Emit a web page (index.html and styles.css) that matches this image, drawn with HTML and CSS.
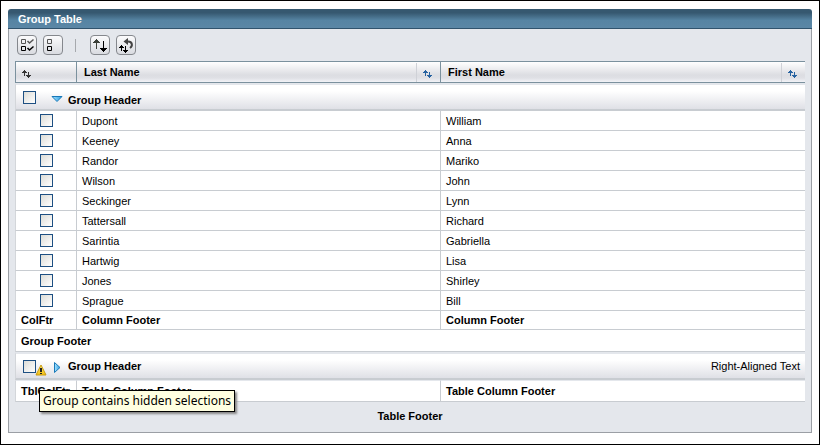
FILE: index.html
```html
<!DOCTYPE html>
<html lang="en">
<head>
<meta charset="utf-8">
<title>Group Table</title>
<link rel="stylesheet" href="styles.css">
</head>
<body>
<svg class="defs" aria-hidden="true">
  <defs>
    <linearGradient id="blue" x1="0" y1="0" x2="1" y2="0"><stop offset="0" stop-color="#a8e4ff"/><stop offset="1" stop-color="#2a9be0"/></linearGradient>
    <linearGradient id="yellow" x1="0" y1="0" x2="0" y2="1"><stop offset="0" stop-color="#fff27a"/><stop offset="1" stop-color="#f2bd10"/></linearGradient>
    <symbol id="sort" viewBox="0 0 9 8"><path fill="currentColor" d="M2 0h1v1h1v1h1v1H3v3H2V3H0V2h1V1h1zM6 2h1v3h2v1H8v1H7v1H6V7H5V6H4V5h2z"/></symbol>
  </defs>
</svg>
<main class="panel">
  <h1 class="title">Group Table</h1>
  <div class="body">
    <div class="toolbar">
      <button class="tool" type="button" aria-label="Select all">
        <svg viewBox="1 1 18 18"><path fill="none" stroke="#555" d="M4.500 4.500h4v4h-4z"/><path fill="none" stroke="#000" d="M4.500 11.500h4v4h-4z"/><path fill="none" stroke="#555" stroke-width="1.500" d="M10.500 6l2 2L16.500 4.500"/><path fill="none" stroke="#000" stroke-width="1.500" d="M10.500 13l2 2L16.500 11.500"/></svg>
      </button>
      <button class="tool" type="button" aria-label="Deselect all">
        <svg viewBox="1 1 18 18"><path fill="none" stroke="#555" d="M4.500 4.500h4v4h-4z"/><path fill="none" stroke="#000" d="M4.500 11.500h4v4h-4z"/></svg>
      </button>
      <span class="divider"></span>
      <button class="tool" type="button" aria-label="Sort">
        <svg viewBox="1 1 18 18"><path fill="#3c4038" d="M6 4h1v1h1v1h1v1h1v1H7v6H6V8H3V7h1V6h1V5h1z"/><path fill="#000" d="M13 6h1v7h3v1h-1v1h-1v1h-1v1h-1v-1h-1v-1h-1v-1h-1v-1h3z"/></svg>
      </button>
      <button class="tool" type="button" aria-label="Clear sort">
        <svg viewBox="1 1 18 18"><path fill="none" stroke="#444" stroke-width="2" d="M10 6.500h2c4.500 0 5 4.500 2 6.500"/><path fill="#444" d="M7.500 6.500L12 3v7z"/><path fill="#000" d="M5 10h1v1h1v1h1v1H6v3H5v-3H3v-1h1v-1h1zM9 11h1v4h2v1h-1v1h-1v1H9v-1H8v-1H7v-1h2z"/></svg>
      </button>
    </div>
    <table class="grid">
      <colgroup><col class="select-col"><col class="last-col"><col></colgroup>
      <thead>
        <tr>
          <th class="sorter"><svg class="sort dark" role="img" aria-label="Sort"><use href="#sort"/></svg></th>
          <th><div class="head"><span>Last Name</span><span class="sort-box"><svg class="sort"><use href="#sort"/></svg></span></div></th>
          <th><div class="head"><span>First Name</span><span class="sort-box"><svg class="sort"><use href="#sort"/></svg></span></div></th>
        </tr>
      </thead>
      <tbody>
        <tr class="group"><td colspan="3"><div class="group-bar">
          <input type="checkbox" aria-label="Select group">
          <button class="toggle" type="button" aria-label="Collapse group"><svg viewBox="0 0 12 12"><path fill="url(#blue)" stroke="#1878b8" d="M1 4.500h10L6 9.500z"/></svg></button>
          <strong class="low">Group Header</strong>
        </div></td></tr>
        <tr><td><input type="checkbox" aria-label="Select Dupont"></td><td>Dupont</td><td>William</td></tr>
        <tr><td><input type="checkbox" aria-label="Select Keeney"></td><td>Keeney</td><td>Anna</td></tr>
        <tr><td><input type="checkbox" aria-label="Select Randor"></td><td>Randor</td><td>Mariko</td></tr>
        <tr><td><input type="checkbox" aria-label="Select Wilson"></td><td>Wilson</td><td>John</td></tr>
        <tr><td><input type="checkbox" aria-label="Select Seckinger"></td><td>Seckinger</td><td>Lynn</td></tr>
        <tr><td><input type="checkbox" aria-label="Select Tattersall"></td><td>Tattersall</td><td>Richard</td></tr>
        <tr><td><input type="checkbox" aria-label="Select Sarintia"></td><td>Sarintia</td><td>Gabriella</td></tr>
        <tr><td><input type="checkbox" aria-label="Select Hartwig"></td><td>Hartwig</td><td>Lisa</td></tr>
        <tr><td><input type="checkbox" aria-label="Select Jones"></td><td>Jones</td><td>Shirley</td></tr>
        <tr><td><input type="checkbox" aria-label="Select Sprague"></td><td>Sprague</td><td>Bill</td></tr>
        <tr class="column-footer"><td>ColFtr</td><td>Column Footer</td><td>Column Footer</td></tr>
        <tr class="group-footer"><td colspan="3">Group Footer</td></tr>
      </tbody>
      <tbody>
        <tr class="group"><td colspan="3"><div class="group-bar">
          <input type="checkbox" aria-label="Select group" aria-describedby="hint">
          <span class="warn"><svg viewBox="0 0 12 12"><path fill="url(#yellow)" stroke="#c89a10" stroke-linejoin="round" d="M6 1l5 10H1z"/><path fill="#222" d="M5 4h2v4H5zM5 9h2v1H5z"/></svg></span>
          <button class="toggle" type="button" aria-label="Expand group"><svg viewBox="0 0 12 12"><path fill="url(#blue)" stroke="#1878b8" d="M3.500 1.500v10L9 6.500z"/></svg></button>
          <strong>Group Header</strong>
          <span class="right">Right-Aligned Text</span>
          <span class="tooltip" id="hint" role="tooltip">Group contains hidden selections</span>
        </div></td></tr>
      </tbody>
      <tfoot>
        <tr class="table-column-footer"><td>TblColFtr</td><td>Table Column Footer</td><td>Table Column Footer</td></tr>
      </tfoot>
    </table>
    <div class="table-footer">Table Footer</div>
  </div>
</main>
</body>
</html>
```
FILE: styles.css
```css
* { box-sizing: border-box; }

body {
  margin: 0;
  min-height: 100vh;
  padding: 8px 7px;
  border: 1px solid #000;
  background: #fff;
  color: #000;
  font: 11px/14px "Liberation Sans", Arial, sans-serif;
}

.defs { position: absolute; width: 0; height: 0; }

.title {
  margin: 0;
  height: 20px;
  padding-left: 10px;
  border-bottom: 1px solid #30536d;
  border-radius: 3px 3px 0 0;
  background: linear-gradient(#365870 0, #365870 20%, #5684a3 60%, #5b87a6);
  color: #fff;
  font-size: 11px;
  line-height: 20px;
}

.body {
  padding: 0 6px;
  border: 1px solid #9b9fa5;
  border-top: 0;
  background: #e4e7ec;
}

.toolbar {
  display: flex;
  align-items: center;
  gap: 6px;
  height: 32px;
  padding-left: 2px;
}

.tool {
  width: 20px;
  height: 20px;
  padding: 0;
  border: 1px solid #85888d;
  border-radius: 4px;
  background: linear-gradient(#fbfbfc, #d9dbe0);
}

.tool svg { display: block; width: 18px; height: 18px; }

.divider {
  width: 1px;
  height: 13px;
  margin: 0 8px 0 6px;
  background: #a6a9ad;
}

.grid {
  width: 100%;
  table-layout: fixed;
  border-spacing: 0;
  background: #fff;
}

.select-col { width: 62px; }
.last-col { width: calc(50% - 30px); }

th {
  height: 22px;
  padding: 0;
  border: solid #7b919e;
  border-width: 1px 1px 1px 0;
  background: linear-gradient(#fff, #dcdde2 65%, #dfe0e5 80%, #f2f3f7);
  text-align: left;
}

th:first-child { border-left-width: 1px; }
th:last-child { border-right: 0; }

.head {
  display: flex;
  justify-content: space-between;
  align-items: center;
  height: 20px;
  padding-left: 7px;
}

.sort-box {
  width: 24px;
  height: 19px;
  align-self: end;
  padding: 7px 0 0 6px;
  border-left: 1px solid #cfd1d7;
}

.sort { display: block; width: 9px; height: 8px; color: #2561a0; }
.sort.dark { margin: 4px 0 0 6px; color: #333; }

td {
  height: 20px;
  padding: 0 5px;
  border-right: 1px solid #c8ccd1;
  border-bottom: 1px solid #c8ccd1;
}

td:first-child { border-left: 1px solid #d3d6da; }
td:last-child { border-right: 0; }

input {
  appearance: none;
  display: block;
  flex: none;
  width: 13px;
  height: 13px;
  margin: 0 auto;
  border: 1px solid #1d4f82;
  background: linear-gradient(135deg, #dcdcd7, #fff);
}

.group td {
  height: 28px;
  padding: 0 5px 0 7px;
  border-top: 2px solid #e4e7ec;
  border-bottom: 2px solid #c8ccd1;
  background: linear-gradient(#fff 25%, #dfe0e6) padding-box;
}

.group-bar {
  position: relative;
  display: flex;
  align-items: center;
  height: 24px;
}

.group-bar input { margin: 0 15px 0 0; }

.group-bar strong { margin-left: 5px; }
.group-bar .low { padding-top: 5px; }

.toggle {
  width: 12px;
  height: 14px;
  padding: 2px 0 0;
  border: 0;
  background: none;
}

.toggle svg, .warn svg { display: block; width: 12px; height: 12px; }

.warn {
  position: absolute;
  left: 12px;
  top: 10px;
}

.right { margin-left: auto; }

.tooltip {
  position: absolute;
  left: 16px;
  top: 36px;
  padding: 1px 3px;
  border: 1px solid #000;
  background: #ffffe1;
  box-shadow: 2px 2px 2px #888;
  font: 12px/18px "Noto Sans", Tahoma, sans-serif;
  white-space: nowrap;
}

.column-footer td, .group-footer td, .table-column-footer td { font-weight: bold; }
.column-footer td { height: 19px; }
.group-footer td { height: 22px; }
.table-column-footer td { height: 22px; border-top: 1px solid #e4e7ec; }

.table-footer {
  padding: 7px 0 9px;
  font-weight: bold;
  text-align: center;
}
```
